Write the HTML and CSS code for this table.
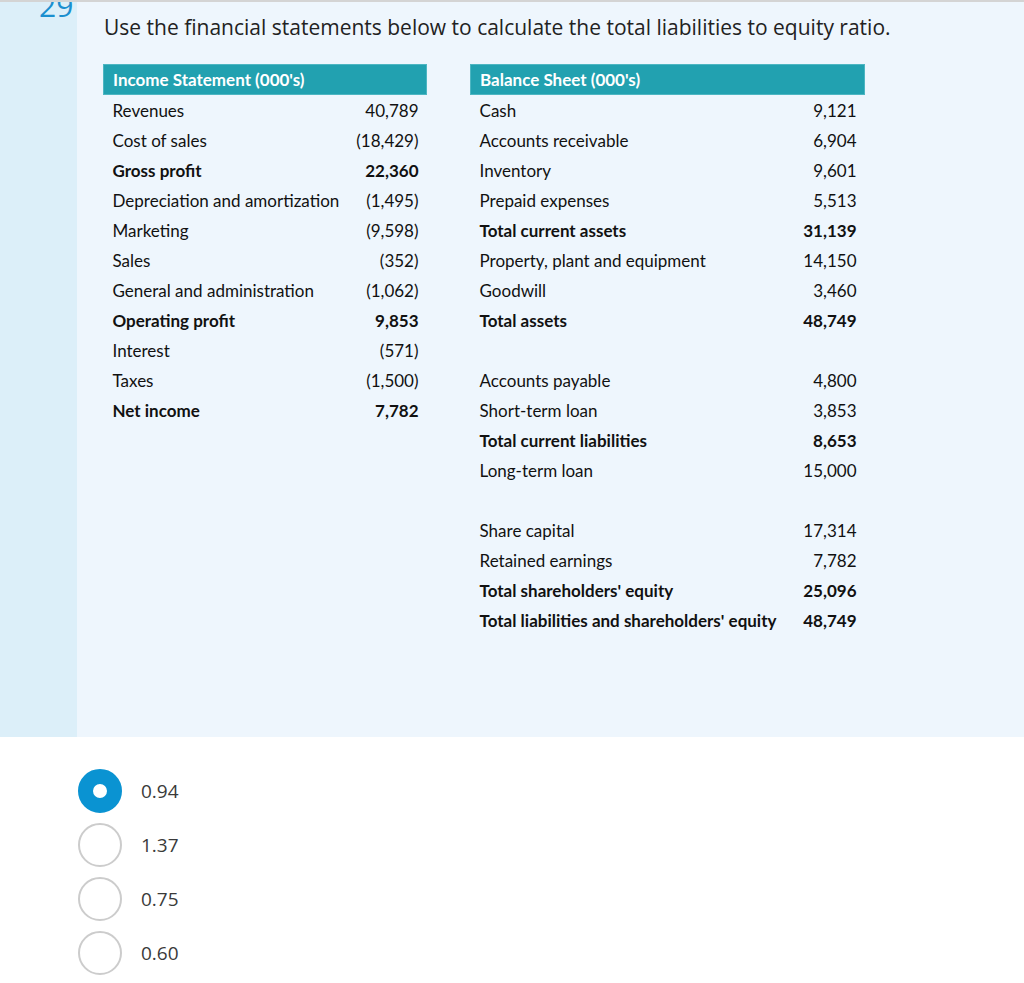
FILE: index.html
```html
<!DOCTYPE html>
<html>
<head>
<meta charset="utf-8">
<link rel="stylesheet" href="styles.css">
</head>
<body>
<div class="question">
  <div class="side"><div class="qnum">29</div></div>
  <div class="main">
    <p class="prompt">Use the financial statements below to calculate the total liabilities to equity ratio.</p>
    <div class="tables">
      <table class="fin income">
        <thead><tr><th colspan="2">Income Statement (000's)</th></tr></thead>
        <tbody>
          <tr><td>Revenues</td><td class="num">40,789</td></tr>
          <tr><td>Cost of sales</td><td class="num">(18,429)</td></tr>
          <tr class="b"><td>Gross profit</td><td class="num">22,360</td></tr>
          <tr><td>Depreciation and amortization</td><td class="num">(1,495)</td></tr>
          <tr><td>Marketing</td><td class="num">(9,598)</td></tr>
          <tr><td>Sales</td><td class="num">(352)</td></tr>
          <tr><td>General and administration</td><td class="num">(1,062)</td></tr>
          <tr class="b"><td>Operating profit</td><td class="num">9,853</td></tr>
          <tr><td>Interest</td><td class="num">(571)</td></tr>
          <tr><td>Taxes</td><td class="num">(1,500)</td></tr>
          <tr class="b"><td>Net income</td><td class="num">7,782</td></tr>
        </tbody>
      </table>
      <table class="fin balance">
        <thead><tr><th colspan="2">Balance Sheet (000's)</th></tr></thead>
        <tbody>
          <tr><td>Cash</td><td class="num">9,121</td></tr>
          <tr><td>Accounts receivable</td><td class="num">6,904</td></tr>
          <tr><td>Inventory</td><td class="num">9,601</td></tr>
          <tr><td>Prepaid expenses</td><td class="num">5,513</td></tr>
          <tr class="b"><td>Total current assets</td><td class="num">31,139</td></tr>
          <tr><td>Property, plant and equipment</td><td class="num">14,150</td></tr>
          <tr><td>Goodwill</td><td class="num">3,460</td></tr>
          <tr class="b"><td>Total assets</td><td class="num">48,749</td></tr>
          <tr class="blank"><td>&nbsp;</td><td></td></tr>
          <tr><td>Accounts payable</td><td class="num">4,800</td></tr>
          <tr><td>Short-term loan</td><td class="num">3,853</td></tr>
          <tr class="b"><td>Total current liabilities</td><td class="num">8,653</td></tr>
          <tr><td>Long-term loan</td><td class="num">15,000</td></tr>
          <tr class="blank"><td>&nbsp;</td><td></td></tr>
          <tr><td>Share capital</td><td class="num">17,314</td></tr>
          <tr><td>Retained earnings</td><td class="num">7,782</td></tr>
          <tr class="b"><td>Total shareholders' equity</td><td class="num">25,096</td></tr>
          <tr class="b"><td>Total liabilities and shareholders' equity</td><td class="num">48,749</td></tr>
        </tbody>
      </table>
    </div>
  </div>
</div>
<div class="answers">
  <label class="opt"><span class="radio checked"></span><span class="otext">0.94</span></label>
  <label class="opt"><span class="radio"></span><span class="otext">1.37</span></label>
  <label class="opt"><span class="radio"></span><span class="otext">0.75</span></label>
  <label class="opt"><span class="radio"></span><span class="otext">0.60</span></label>
</div>
</body>
</html>
```

FILE: styles.css
```css
html, body {
  margin: 0;
  padding: 0;
  background: #ffffff;
}
body {
  font-family: "Open Sans", "Noto Sans", sans-serif;
  color: #222;
  border-top: 2px solid #d4d4d4;
}
.question {
  display: flex;
  height: 735px;
}
.side {
  width: 77px;
  flex: none;
  background: #dceff9;
  overflow: hidden;
}
.qnum {
  margin: -14px 0 0 39px;
  font-size: 30px;
  line-height: 36px;
  color: #1b8fcf;
}
.main {
  flex: 1;
  background: #eef6fd;
  padding: 0 0 0 26px;
}
.prompt {
  margin: 10px 0 0 1px;
  font-size: 21px;
  line-height: 30px;
  color: #222;
}
.tables {
  display: flex;
  align-items: flex-start;
  gap: 43px;
  margin-top: 22px;
}
.fin {
  border-collapse: collapse;
  font-family: Lato, "Open Sans", sans-serif;
  font-size: 17px;
  color: #111;
}
.income { width: 324px; }
.balance { width: 395px; }
.fin th {
  background: #22a1b0;
  color: #fff;
  text-align: left;
  font-weight: 700;
  height: 30px;
  padding: 0 9px;
  border: 1px solid #4db6c2;
  box-sizing: border-box;
}
.fin td {
  height: 30px;
  padding: 0 8px 0 9px;
  white-space: nowrap;
}
.fin td.num {
  text-align: right;
}
.fin tr.b td {
  font-weight: 700;
}
.answers {
  padding: 32px 0 0 78px;
  display: flex;
  flex-direction: column;
  gap: 10px;
}
.opt {
  display: flex;
  align-items: center;
  gap: 19px;
  font-size: 19px;
  color: #3a3a3a;
}
.radio {
  width: 44px;
  height: 44px;
  border-radius: 50%;
  box-sizing: border-box;
  border: 2px solid #cccccc;
  background: #fff;
}
.radio.checked {
  border: 15px solid #0a93d2;
  background: #fff;
}
```
